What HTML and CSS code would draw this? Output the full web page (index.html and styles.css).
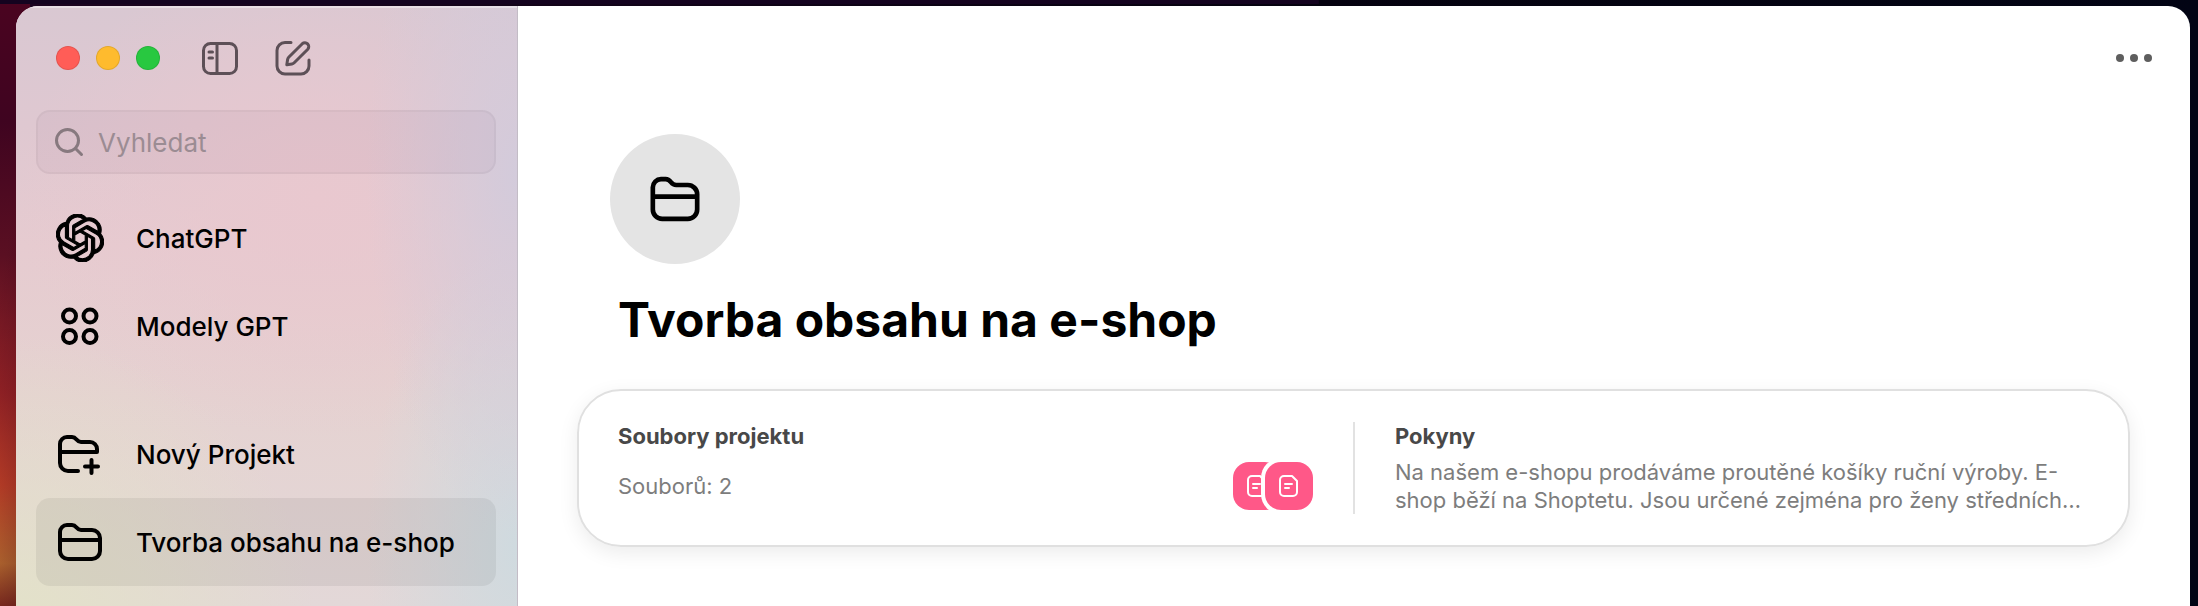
FILE: index.html
```html
<!DOCTYPE html>
<html lang="cs">
<head>
    <meta charset="UTF-8">
    <meta name="viewport" content="width=device-width, initial-scale=1.0">
    <title>Tvorba obsahu na e-shop</title>
    <link rel="stylesheet" href="styles.css">
</head>
<body>

    <div class="window">
        <aside class="sidebar">
            <div class="toolbar">
                <div class="lights">
                    <button class="light red" aria-label="Zavřít"></button>
                    <button class="light yellow" aria-label="Minimalizovat"></button>
                    <button class="light green" aria-label="Zvětšit"></button>
                </div>
                <button class="tool" aria-label="Postranní panel">
                    <svg width="40" height="40" viewBox="0 0 40 40" fill="none" stroke="#5d5057" stroke-width="3" stroke-linecap="round">
                        <rect x="3.500" y="5.500" width="33" height="30" rx="7"/>
                        <path d="M17 5.500v30M9 14h3.500M9 20h3.500"/>
                    </svg>
                </button>
                <button class="tool" aria-label="Nový chat">
                    <svg width="40" height="40" viewBox="0 0 40 40" fill="none" stroke="#5d5057" stroke-width="3" stroke-linecap="round" stroke-linejoin="round">
                        <path d="M17 4.500H11a8 8 0 0 0-8 8V28a8 8 0 0 0 8 8h16a8 8 0 0 0 8-8v-6"/>
                        <path d="M12.800 26.800l.8-5.300a4 4 0 0 1 1.100-2.200L28.300 5.700a3.900 3.900 0 0 1 5.500 5.500L20.200 24.800a4 4 0 0 1-2.200 1.100z"/>
                    </svg>
                </button>
            </div>

            <label class="search">
                <svg width="30" height="30" viewBox="0 0 30 30" fill="none" stroke="#87797f" stroke-width="3" stroke-linecap="round">
                    <circle cx="13.500" cy="13.500" r="11"/>
                    <path d="M21.500 21.500l6 6"/>
                </svg>
                <input type="text" placeholder="Vyhledat" aria-label="Vyhledat">
            </label>

            <nav>
                <a class="item" href="#">
                    <svg width="48" height="48" viewBox="0 0 24 24">
                        <path d="M22.282 9.821a5.985 5.985 0 0 0-.516-4.910 6.046 6.046 0 0 0-6.510-2.900A6.065 6.065 0 0 0 4.981 4.180a5.985 5.985 0 0 0-3.998 2.900 6.046 6.046 0 0 0 .743 7.097 5.980 5.980 0 0 0 .510 4.911 6.051 6.051 0 0 0 6.515 2.900A5.985 5.985 0 0 0 13.260 24a6.056 6.056 0 0 0 5.772-4.206 5.990 5.990 0 0 0 3.997-2.900 6.056 6.056 0 0 0-.747-7.073zM13.260 22.430a4.476 4.476 0 0 1-2.876-1.040l.141-.081 4.779-2.758a.795.795 0 0 0 .392-.681v-6.737l2.020 1.168a.071.071 0 0 1 .038.052v5.583a4.504 4.504 0 0 1-4.494 4.494zM3.600 18.304a4.470 4.470 0 0 1-.535-3.014l.142.085 4.783 2.759a.771.771 0 0 0 .780 0l5.843-3.369v2.332a.080.080 0 0 1-.033.062L9.740 19.950a4.500 4.500 0 0 1-6.140-1.646zM2.340 7.896a4.485 4.485 0 0 1 2.366-1.973V11.600a.766.766 0 0 0 .388.676l5.815 3.355-2.020 1.168a.076.076 0 0 1-.071 0l-4.830-2.786A4.504 4.504 0 0 1 2.340 7.872zm16.597 3.855l-5.833-3.387L15.119 7.200a.076.076 0 0 1 .071 0l4.830 2.791a4.494 4.494 0 0 1-.676 8.105v-5.678a.790.790 0 0 0-.407-.667zm2.010-3.023l-.141-.085-4.774-2.782a.776.776 0 0 0-.785 0L9.409 9.230V6.897a.066.066 0 0 1 .028-.061l4.830-2.787a4.500 4.500 0 0 1 6.680 4.660zm-12.640 4.135l-2.020-1.164a.080.080 0 0 1-.038-.057V6.075a4.500 4.500 0 0 1 7.375-3.453l-.142.080L8.704 5.460a.795.795 0 0 0-.393.681zm1.097-2.365l2.602-1.500 2.607 1.500v2.999l-2.597 1.500-2.607-1.500z" stroke="#000" stroke-width=".55"/>
                    </svg>
                    <span>ChatGPT</span>
                </a>
                <a class="item" href="#">
                    <svg width="48" height="48" viewBox="0 0 48 48" fill="none" stroke="#000" stroke-width="4">
                        <circle cx="13.500" cy="14" r="6.500"/>
                        <circle cx="34" cy="14" r="6.500"/>
                        <circle cx="13.500" cy="34.500" r="6.500"/>
                        <circle cx="34" cy="34.500" r="6.500"/>
                    </svg>
                    <span>Modely GPT</span>
                </a>
                <a class="item spaced" href="#">
                    <svg width="48" height="48" viewBox="0 0 48 48" fill="none" stroke="#000" stroke-width="4" stroke-linecap="round" stroke-linejoin="round">
                        <path d="M22 41H12a8 8 0 0 1-8-8V14a7 7 0 0 1 7-7h5c5 0 4 5 9 5h9a7 7 0 0 1 7 7v3H4"/>
                        <path d="M35.500 30v13M29 36.500h13"/>
                    </svg>
                    <span>Nový Projekt</span>
                </a>
                <a class="item active" href="#">
                    <svg width="48" height="48" viewBox="0 0 48 48" fill="none" stroke="#000" stroke-width="4" stroke-linejoin="round">
                        <path d="M4 14a7 7 0 0 1 7-7h5c5 0 4 5 9 5h11a8 8 0 0 1 8 8v13a8 8 0 0 1-8 8H12a8 8 0 0 1-8-8zM4 22h40"/>
                    </svg>
                    <span>Tvorba obsahu na e-shop</span>
                </a>
            </nav>
        </aside>

        <main class="main">
            <div class="topbar">
                <button class="more" aria-label="Další možnosti">
                    <svg width="40" height="20" viewBox="0 0 40 20" fill="#5e5e5e">
                        <circle cx="6" cy="10" r="4"/>
                        <circle cx="20" cy="10" r="4"/>
                        <circle cx="34" cy="10" r="4"/>
                    </svg>
                </button>
            </div>

            <div class="avatar">
                <svg width="56" height="56" viewBox="0 0 48 48" fill="none" stroke="#000" stroke-width="4" stroke-linejoin="round">
                    <path d="M5 14a7 7 0 0 1 7-7h4c5 0 4 5 9 5h10a8 8 0 0 1 8 8v13a8 8 0 0 1-8 8H13a8 8 0 0 1-8-8zM5 22h38"/>
                </svg>
            </div>
            <h1>Tvorba obsahu na e-shop</h1>

            <section class="card">
                <div class="files">
                    <div>
                        <h2>Soubory projektu</h2>
                        <p class="count">Souborů: 2</p>
                    </div>
                    <div class="badges">
                        <span class="badge">
                            <svg width="24" height="24" viewBox="0 0 24 24" fill="none" stroke="#fff" stroke-width="2" stroke-linecap="round" stroke-linejoin="round">
                                <path d="M7 2h8l5 5v11a4 4 0 0 1-4 4H7a4 4 0 0 1-4-4V6a4 4 0 0 1 4-4zM8 10h7M8 14h4"/>
                            </svg>
                        </span>
                        <span class="badge">
                            <svg width="24" height="24" viewBox="0 0 24 24" fill="none" stroke="#fff" stroke-width="2" stroke-linecap="round" stroke-linejoin="round">
                                <path d="M7 2h8l5 5v11a4 4 0 0 1-4 4H7a4 4 0 0 1-4-4V6a4 4 0 0 1 4-4zM8 10h7M8 14h4"/>
                            </svg>
                        </span>
                    </div>
                </div>
                <div class="notes">
                    <h2>Pokyny</h2>
                    <p>Na našem e-shopu prodáváme proutěné košíky ruční výroby. E-<br>shop běží na Shoptetu. Jsou určené zejména pro ženy středních…</p>
                </div>
            </section>
        </main>
    </div>

</body>
</html>
```
FILE: styles.css
```css
* {
    box-sizing: border-box;
}

body {
    margin: 0;
    min-height: 100vh;
    padding: 6px 8px 0 16px;
    display: flex;
    font-family: Inter, "Liberation Sans", sans-serif;
    color: #000;
    /* desktop wallpaper behind the window */
    background:
        linear-gradient(#14031f 0 4px, transparent 4px) 0 0 / 60% 100% no-repeat,
        linear-gradient(100deg, transparent 40%, rgba(40, 0, 20, 0.4)) 0 0 / 16px 100% no-repeat,
        linear-gradient(#4a0420, #3f0420 20%, #5a0f22 42%, #9a2426 65%, #d2482a 80%, #d98236 93%, #9a3a22) 0 0 / 30px 100% no-repeat,
        linear-gradient(90deg, #1c0420, #05020f 60%, #020414);
}

h1, h2, p {
    margin: 0;
}

button {
    border: none;
    padding: 0;
    background: none;
    cursor: pointer;
}

svg {
    display: block;
    flex: none;
}

.window {
    flex: 1;
    display: flex;
    overflow: hidden;
    border-radius: 22px 22px 0 0;
    background-color: #fff;
}

.sidebar {
    flex: none;
    width: 502px;
    padding: 0 21px 0 20px;
    border-right: 1px solid #c3bcc6;
    box-shadow: inset 0 2px 0 rgba(255, 255, 255, 0.4);
    background:
        radial-gradient(ellipse 30% 60% at 100% 28%, #d3cbdb, rgba(211, 203, 219, 0)),
        radial-gradient(ellipse 30% 50% at 100% 90%, #cfdadf, rgba(207, 218, 223, 0)),
        radial-gradient(ellipse 60% 50% at 0% 105%, #e3e2c8, rgba(227, 226, 200, 0)),
        radial-gradient(ellipse 60% 40% at 60% 32%, #e9c8cf, rgba(233, 200, 207, 0)),
        linear-gradient(#d9c8d2, #dfc8d1 20%, #e6cbd0 40%, #e5d2d1 65%, #e3d8d8);
}

.toolbar {
    display: flex;
    align-items: center;
    gap: 34px;
    height: 104px;
    padding-left: 20px;
}

.lights {
    display: flex;
    gap: 16px;
    margin-right: 6px;
}

.light {
    width: 24px;
    height: 24px;
    border-radius: 50%;
    border: 1px solid rgba(0, 0, 0, 0.1);
}

.red {
    background-color: #ff5d57;
}

.yellow {
    background-color: #febb2e;
}

.green {
    background-color: #28c840;
}

.search {
    display: flex;
    align-items: center;
    gap: 14px;
    height: 64px;
    margin-bottom: 20px;
    padding: 0 16px;
    border: 2px solid rgba(0, 0, 0, 0.03);
    border-radius: 14px;
    background-color: rgba(90, 60, 90, 0.05);
}

.search input {
    flex: 1;
    min-width: 0;
    padding: 0;
    border: none;
    outline: none;
    background: none;
    font: inherit;
    font-size: 26px;
}

.search input::placeholder {
    color: #9b8c93;
}

.item {
    display: flex;
    align-items: center;
    gap: 32px;
    height: 88px;
    padding: 0 20px;
    border-radius: 14px;
    color: #000;
    font-size: 26px;
    font-weight: 500;
    text-decoration: none;
    white-space: nowrap;
}

.spaced {
    margin-top: 40px;
}

.active {
    background-color: rgba(0, 0, 0, 0.06);
}

.main {
    flex: 1;
    min-width: 0;
    padding: 0 60px 0 59px;
}

.topbar {
    display: flex;
    justify-content: flex-end;
    align-items: center;
    height: 104px;
    margin-right: -24px;
}

.avatar {
    display: flex;
    align-items: center;
    justify-content: center;
    width: 130px;
    height: 130px;
    margin: 24px 0 0 33px;
    border-radius: 50%;
    background-color: #e4e4e4;
}

h1 {
    margin: 24px 0 37px 41px;
    font-size: 48px;
    line-height: 64px;
    font-weight: 700;
}

.card {
    display: flex;
    padding: 31px 38px 31px 39px;
    border: 2px solid #e0e0e0;
    border-radius: 44px;
    box-shadow: 0 6px 20px rgba(0, 0, 0, 0.08);
}

h2 {
    font-size: 22px;
    line-height: 28px;
    font-weight: 700;
    color: #484848;
}

.card p {
    font-size: 22px;
    line-height: 28px;
    color: #7d7d7d;
}

.card .count {
    margin-top: 22px;
}

.files {
    flex: 1;
    display: flex;
    justify-content: space-between;
    padding-right: 40px;
    border-right: 2px solid #e2e2e2;
}

.badges {
    display: flex;
    align-items: flex-end;
    padding-bottom: 4px;
}

.badge {
    display: flex;
    align-items: center;
    justify-content: center;
    width: 48px;
    height: 48px;
    border-radius: 16px;
    background-color: #ff5888;
}

/* second file overlaps the first one */
.badge + .badge {
    margin-left: -16px;
    box-shadow: 0 0 0 4px #fff;
}

.notes {
    width: 735px;
    padding-left: 40px;
    white-space: nowrap;
}

.notes p {
    margin-top: 8px;
}
```
